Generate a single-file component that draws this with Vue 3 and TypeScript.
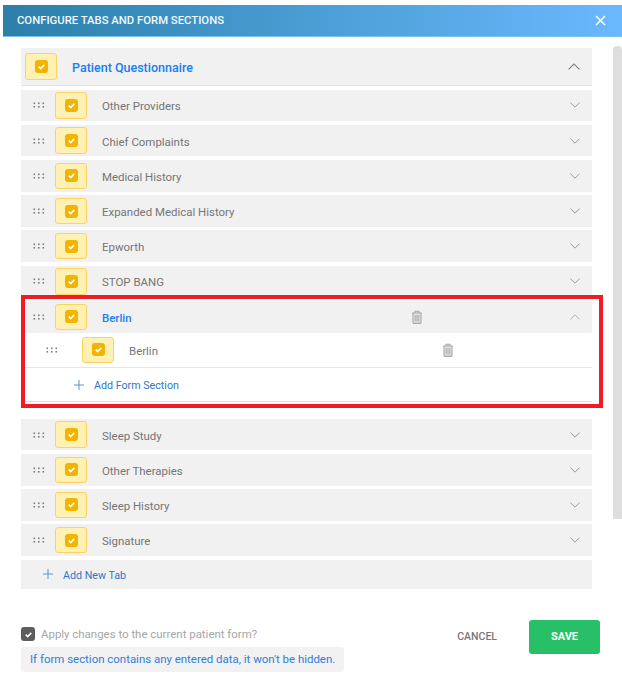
<script setup lang="ts">
const upper: string[] = ['Other Providers', 'Chief Complaints', 'Medical History', 'Expanded Medical History', 'Epworth', 'STOP BANG']
const lower: string[] = ['Sleep Study', 'Other Therapies', 'Sleep History', 'Signature']
</script>

<template>
  <div class="modal">
    <svg width="0" height="0" class="defs" aria-hidden="true">
      <symbol id="grip" viewBox="0 0 12 6">
        <g fill="#808080">
          <rect x="0.5" y="0.5" width="1.6" height="1.6" /><rect x="5" y="0.5" width="1.6" height="1.6" /><rect x="9.5" y="0.5" width="1.6" height="1.6" />
          <rect x="0.5" y="4" width="1.6" height="1.6" /><rect x="5" y="4" width="1.6" height="1.6" /><rect x="9.5" y="4" width="1.6" height="1.6" />
        </g>
      </symbol>
      <symbol id="down" viewBox="0 0 10 6">
        <path d="M0.4 0.6 L5 5.2 L9.6 0.6" fill="none" stroke="#9a9a9a" stroke-width="1" />
      </symbol>
      <symbol id="up" viewBox="0 0 10 6">
        <path d="M0.4 5.4 L5 0.8 L9.6 5.4" fill="none" stroke="currentColor" stroke-width="0.9" />
      </symbol>
      <symbol id="trash" viewBox="0 0 12 14">
        <path d="M1 3 H11 M4 3 V1.2 H8 V3 M2 3 V12.4 Q2 13.4 3 13.4 H9 Q10 13.4 10 12.4 V3" fill="#e4e4e4" stroke="#a8a8a8" stroke-width="1.1" />
        <path d="M4.2 5 V11.5 M6 5 V11.5 M7.8 5 V11.5" fill="none" stroke="#a8a8a8" stroke-width="1" />
      </symbol>
      <symbol id="tick" viewBox="0 0 14 14">
        <path d="M4 7.2 L6.1 9.2 L10 5.2" fill="none" stroke="#fff" stroke-width="1.7" />
      </symbol>
      <symbol id="plus" viewBox="0 0 10 10">
        <path d="M5 0 V10 M0 5 H10" fill="none" stroke="#5b93d4" stroke-width="1" />
      </symbol>
    </svg>

    <header class="head">
      <span class="title">CONFIGURE TABS AND FORM SECTIONS</span>
      <svg class="close" width="11" height="11" viewBox="0 0 11 11">
        <path d="M1 1 L10 10 M10 1 L1 10" stroke="#fff" stroke-width="1.5" fill="none" />
      </svg>
    </header>

    <div class="body">
      <div class="content">
        <div class="top-row">
          <span class="box"><span class="inner"><svg width="13" height="13"><use href="#tick" /></svg></span></span>
          <span class="top-label">Patient Questionnaire</span>
          <svg class="chev top-chev" width="12" height="7"><use href="#up" /></svg>
        </div>

        <div class="rows upper">
          <div v-for="name in upper" :key="name" class="row">
            <svg class="grip" width="12" height="6"><use href="#grip" /></svg>
            <span class="box"><span class="inner"><svg width="13" height="13"><use href="#tick" /></svg></span></span>
            <span class="label">{{ name }}</span>
            <svg class="chev" width="10" height="6"><use href="#down" /></svg>
          </div>
        </div>

        <section class="open">
          <div class="row open-head">
            <svg class="grip" width="12" height="6"><use href="#grip" /></svg>
            <span class="box"><span class="inner"><svg width="13" height="13"><use href="#tick" /></svg></span></span>
            <span class="label open-label">Berlin</span>
            <svg class="trash trash-a" width="12" height="14"><use href="#trash" /></svg>
            <svg class="chev chev-light" width="10" height="6"><use href="#up" /></svg>
          </div>
          <div class="child">
            <svg class="grip" width="12" height="6"><use href="#grip" /></svg>
            <span class="box"><span class="inner"><svg width="13" height="13"><use href="#tick" /></svg></span></span>
            <span class="label">Berlin</span>
            <svg class="trash trash-b" width="12" height="14"><use href="#trash" /></svg>
          </div>
          <div class="add-section">
            <svg width="10" height="10"><use href="#plus" /></svg>
            <span class="add-text">Add Form Section</span>
          </div>
          <div class="annot"></div>
        </section>

        <div class="rows">
          <div v-for="name in lower" :key="name" class="row">
            <svg class="grip" width="12" height="6"><use href="#grip" /></svg>
            <span class="box"><span class="inner"><svg width="13" height="13"><use href="#tick" /></svg></span></span>
            <span class="label">{{ name }}</span>
            <svg class="chev" width="10" height="6"><use href="#down" /></svg>
          </div>
        </div>

        <div class="add-tab">
          <svg width="10" height="10"><use href="#plus" /></svg>
          <span class="add-text">Add New Tab</span>
        </div>
      </div>
      <div class="scrollbar"></div>
    </div>

    <footer class="foot">
      <div class="foot-left">
        <label class="apply">
          <span class="mini"><svg width="13" height="13"><use href="#tick" /></svg></span>
          <span>Apply changes to the current patient form?</span>
        </label>
        <div class="note">If form section contains any entered data, it won't be hidden.</div>
      </div>
      <div class="actions">
        <span class="cancel">CANCEL</span>
        <span class="save">SAVE</span>
      </div>
    </footer>
  </div>
</template>

<style>
html, body { background: #fff; }
</style>

<style scoped>
.modal {
  width: 619px;
  margin: 5px 0 0 3px;
  font-family: Roboto, "Liberation Sans", sans-serif;
  font-size: 11.45px;
  color: #757575;
}
.defs { position: absolute; }
.head {
  height: 32px;
  display: flex;
  align-items: center;
  justify-content: space-between;
  padding: 0 16px 0 14px;
  box-sizing: border-box;
  background: linear-gradient(90deg, #2b7fa9, #4b9fd6 52%, #6bb8fe);
  border-bottom: 1px solid #7cc0ee;
}
.title { color: #f2f8fc; font-size: 11.3px; font-weight: 500; }
.body { display: flex; align-items: flex-start; }
.content { width: 571px; margin: 11px 0 0 18px; }
.scrollbar {
  width: 9px;
  height: 473px;
  margin: 9px 0 0 21px;
  background: #dedede;
  border-radius: 4px 4px 0 0;
}
.top-row {
  height: 38px;
  display: flex;
  align-items: center;
  box-sizing: border-box;
  padding: 0 12px 0 4px;
  background: #f1f1f1;
  border-bottom: 1px solid #e2e2e2;
}
.top-row .box { margin-right: 15px; }
.top-label { flex: 1; color: #1a7df0; font-size: 12.5px; font-weight: 500; padding-top: 2px; }
.top-chev { color: #777; }
.rows { display: flex; flex-direction: column; gap: 3.7px; }
.upper { margin-top: 3.7px; }
.row {
  height: 31.5px;
  display: flex;
  align-items: center;
  background: #f1f1f1;
  padding: 0 12px 0 12px;
}
.grip { flex: none; }
.box {
  flex: none;
  width: 32px;
  height: 26.5px;
  box-sizing: border-box;
  display: flex;
  align-items: center;
  justify-content: center;
  background: #fff1b3;
  border: 1px solid #fdd360;
  border-radius: 3px;
}
.inner {
  width: 13px;
  height: 13px;
  display: block;
  background: #f1b400;
  border-radius: 3px;
}
.inner svg, .mini svg { display: block; }
.row .box { margin-left: 10px; }
.label { margin-left: 15px; flex: 1; padding-top: 2px; }
.open {
  position: relative;
  margin-top: 3.7px;
  margin-bottom: 17px;
}
.open-head { height: 32px; }
.open-label { color: #1a7df0; font-weight: 500; }
.chev { flex: none; display: block; }
.chev-light { color: #aaa; }
.trash { flex: none; }
.trash-a { margin-right: 147.5px; }
.child {
  height: 35px;
  display: flex;
  align-items: center;
  box-sizing: border-box;
  padding-left: 25px;
  border-bottom: 1px solid #e6e6e6;
}
.child .box { margin-left: 24px; }
.trash-b { margin-right: 138px; }
.add-section {
  height: 34px;
  display: flex;
  align-items: center;
  box-sizing: border-box;
  padding: 1px 0 0 53px;
  border-bottom: 1px solid #dcdcdc;
}
.add-text { margin-left: 10px; color: #2f76c9; font-size: 10.7px; padding-top: 2px; }
.annot {
  position: absolute;
  left: 0;
  right: -11px;
  top: -6px;
  bottom: -6px;
  border: 4px solid #ee1c25;
  pointer-events: none;
}
.add-tab {
  height: 29px;
  margin-top: 4px;
  display: flex;
  align-items: center;
  padding-left: 22px;
  background: #f1f1f1;
}
.foot {
  display: flex;
  justify-content: space-between;
  padding: 31.5px 22px 0 18px;
}
.apply { display: flex; align-items: center; gap: 6px; color: #a6a6a6; height: 14px; margin-top: 7px; }
.mini {
  width: 14px;
  height: 14px;
  display: flex;
  align-items: center;
  justify-content: center;
  background: #5d5d5d;
  border-radius: 3px;
}
.note {
  margin-top: 6px;
  height: 25px;
  line-height: 25px;
  padding: 0 9px;
  background: #f2f2f2;
  border-radius: 3px;
  color: #2f7ed8;
}
.actions { display: flex; align-items: flex-start; }
.cancel {
  margin: 0 32px 0 0;
  height: 34px;
  line-height: 34px;
  color: #777;
  font-size: 10.5px;
  font-weight: 500;
}
.save {
  width: 71px;
  height: 34px;
  line-height: 34px;
  text-align: center;
  color: #fff;
  font-size: 11px;
  font-weight: 700;
  background: #28c066;
  border-radius: 3px;
}
</style>
